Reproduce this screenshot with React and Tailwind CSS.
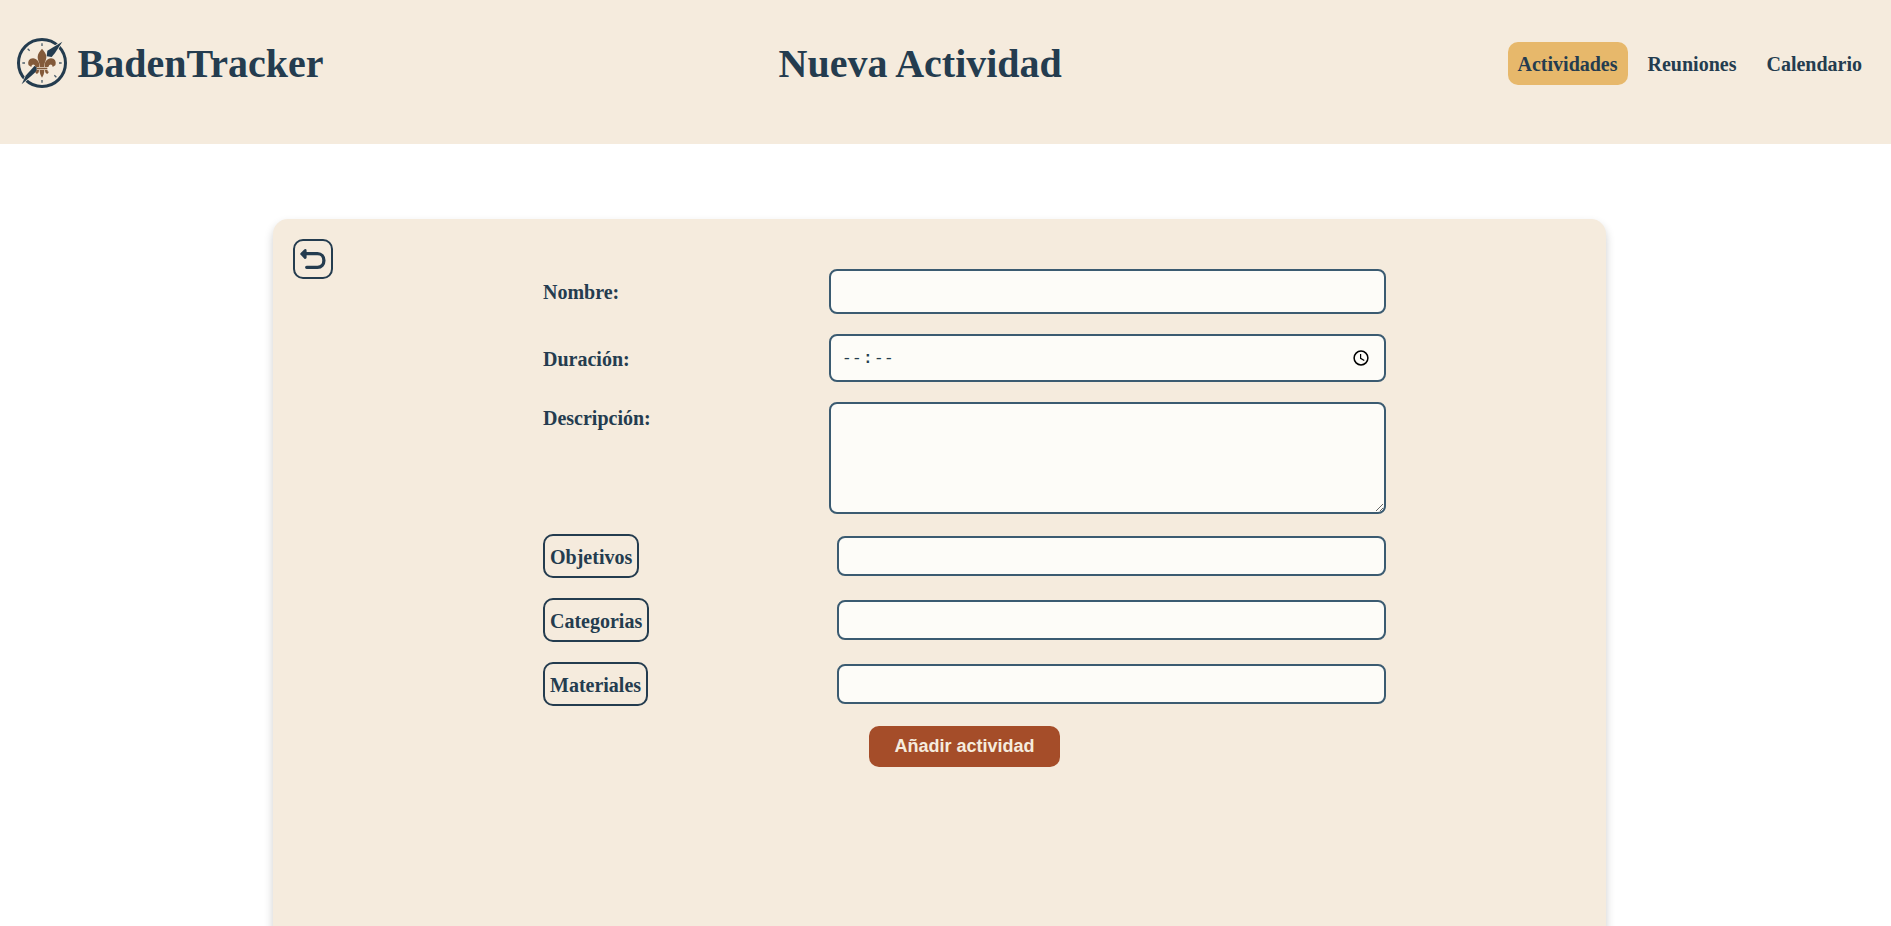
function Logo() {
  return (
    <svg className="h-16 w-16 shrink-0" viewBox="0 0 192 192" aria-hidden="true">
      <circle cx="96" cy="99" r="70.5" fill="none" stroke="#243c4f" strokeWidth="9" />
      <g stroke="#243c4f" strokeWidth="4" opacity="0.8">
        <path d="M96 40v8M96 150v8M37 99h8M147 99h8M53 56l6 6M133 136l6 6" />
      </g>
      <g fill="#243c4f" stroke="#f5ebdd" strokeWidth="4" paintOrder="stroke">
        <path d="M157 35L112 62L110 79L125 81L135 69Z" />
        <path d="M35 163L48 136L74 107L80 112L80 123L66 136Z" />
      </g>
      <g fill="#835a3a">
        <path d="M96 56C89 64 83 71 83 81C83 91 89 97 90 111H102C103 97 109 91 109 81C109 71 103 64 96 56Z" />
        <path d="M88 111C90 96 80 85 69 85C58 85 52 95 56 106L64 111C64 102 74 100 77 111Z" />
        <path d="M104 111C102 96 112 85 123 85C134 85 140 95 136 106L128 111C128 102 118 100 115 111Z" />
        <path d="M80 113H112V118H80Z" />
        <path d="M89 120H103C103 128 101 136 96 143C91 136 89 128 89 120Z" />
        <path d="M79 120H87C87 127 84 132 79 131L75 125C79 126 80 123 79 120Z" />
        <path d="M113 120H105C105 127 108 132 113 131L117 125C113 126 112 123 113 120Z" />
      </g>
    </svg>
  );
}

function NavLink({ active, children }) {
  return (
    <a
      href="#"
      className={
        active
          ? "flex h-[43px] items-center rounded-[10px] bg-[#e7b86b] px-2.5 pt-px"
          : "flex h-[43px] items-center rounded-[10px] px-2.5 pt-px"
      }
    >
      {children}
    </a>
  );
}

function PickerRow({ label }) {
  return (
    <div className="flex items-center justify-between">
      <button
        type="button"
        className="h-11 rounded-[10px] border-2 border-[#243c4f] px-[5px] pt-px font-bold"
      >
        {label}
      </button>
      <div className="h-10 w-[549px] rounded-lg border-2 border-[#3b5b71] bg-[#fdfcf8]" />
    </div>
  );
}

export default function App() {
  return (
    <div className="h-[926px] overflow-hidden bg-white font-['Liberation_Serif',serif] text-[20px] leading-7 font-bold text-[#243c4f]">
      <header className="grid h-36 grid-cols-[768.5px_1fr_auto] items-start bg-[#f5ebdd] pt-[30px] pr-[19px] pl-2.5">
        <div className="flex items-start gap-[3.5px]">
          <Logo />
          <span className="pt-0.5 text-[40px] leading-[64px]">BadenTracker</span>
        </div>
        <h1 className="pt-0.5 text-[40px] leading-[64px]">Nueva Actividad</h1>
        <nav className="mt-3 flex justify-end gap-2.5">
          <NavLink active>Actividades</NavLink>
          <NavLink>Reuniones</NavLink>
          <NavLink>Calendario</NavLink>
        </nav>
      </header>

      <main className="mt-[75px] ml-[273px] flex h-[760px] w-[1333px] items-start rounded-[15px] bg-[#f5ebdd] p-5 shadow-[0_5px_10px_rgba(0,0,0,0.2)]">
        <button
          type="button"
          aria-label="Volver"
          className="flex h-10 w-10 shrink-0 items-center justify-center rounded-[10px] border-2 border-[#243c4f]"
        >
          <svg className="h-9 w-9" viewBox="0 0 36 36" fill="none" stroke="#243c4f" strokeLinecap="round" strokeLinejoin="round">
            <path d="M8 12.7H22.5C26.5 12.7 28.9 15.7 28.9 19.5C28.9 23.3 26.5 26.3 22.5 26.3H11.7" strokeWidth="3.3" />
            <path d="M10.2 9.5L6.7 12.9L10.2 16.6Z" fill="#243c4f" strokeWidth="2.8" />
          </svg>
        </button>

        <form className="mt-[30px] ml-[210px] flex w-[843px] flex-col gap-5">
          <div className="flex items-center justify-between">
            <label className="pt-px">Nombre:</label>
            <input type="text" className="h-[45px] w-[557px] rounded-lg border-2 border-[#3b5b71] bg-[#fdfcf8] px-3" />
          </div>
          <div className="flex items-center justify-between">
            <label className="pt-px">Duración:</label>
            <div className="flex h-12 w-[557px] items-center justify-between rounded-lg border-2 border-[#3b5b71] bg-[#fdfcf8] pr-[15px] pl-[11px] font-['Liberation_Mono',monospace] text-base font-normal tracking-[0.384px]">
              <span className="flex gap-px pt-0.5">
                <span>--</span>
                <span className="font-bold">:</span>
                <span>--</span>
              </span>
              <svg className="h-4 w-4" viewBox="0 0 16 16" fill="none" stroke="#000">
                <circle cx="8" cy="8" r="6.9" strokeWidth="1.5" />
                <path d="M7.6 4v4.3l3.7 2.3" strokeWidth="1.2" />
              </svg>
            </div>
          </div>
          <div className="flex items-start justify-between">
            <label className="pt-0.5">Descripción:</label>
            <textarea className="block h-28 w-[557px] resize rounded-lg border-2 border-[#3b5b71] bg-[#fdfcf8]" />
          </div>
          <PickerRow label="Objetivos" />
          <PickerRow label="Categorias" />
          <PickerRow label="Materiales" />
          <button
            type="button"
            className="h-[41px] w-[191px] self-center rounded-[10px] bg-[#a54d29] pb-px font-['Liberation_Sans',sans-serif] text-lg leading-[27px] font-bold text-[#f5ebdd]"
          >
            Añadir actividad
          </button>
        </form>
      </main>
    </div>
  );
}
